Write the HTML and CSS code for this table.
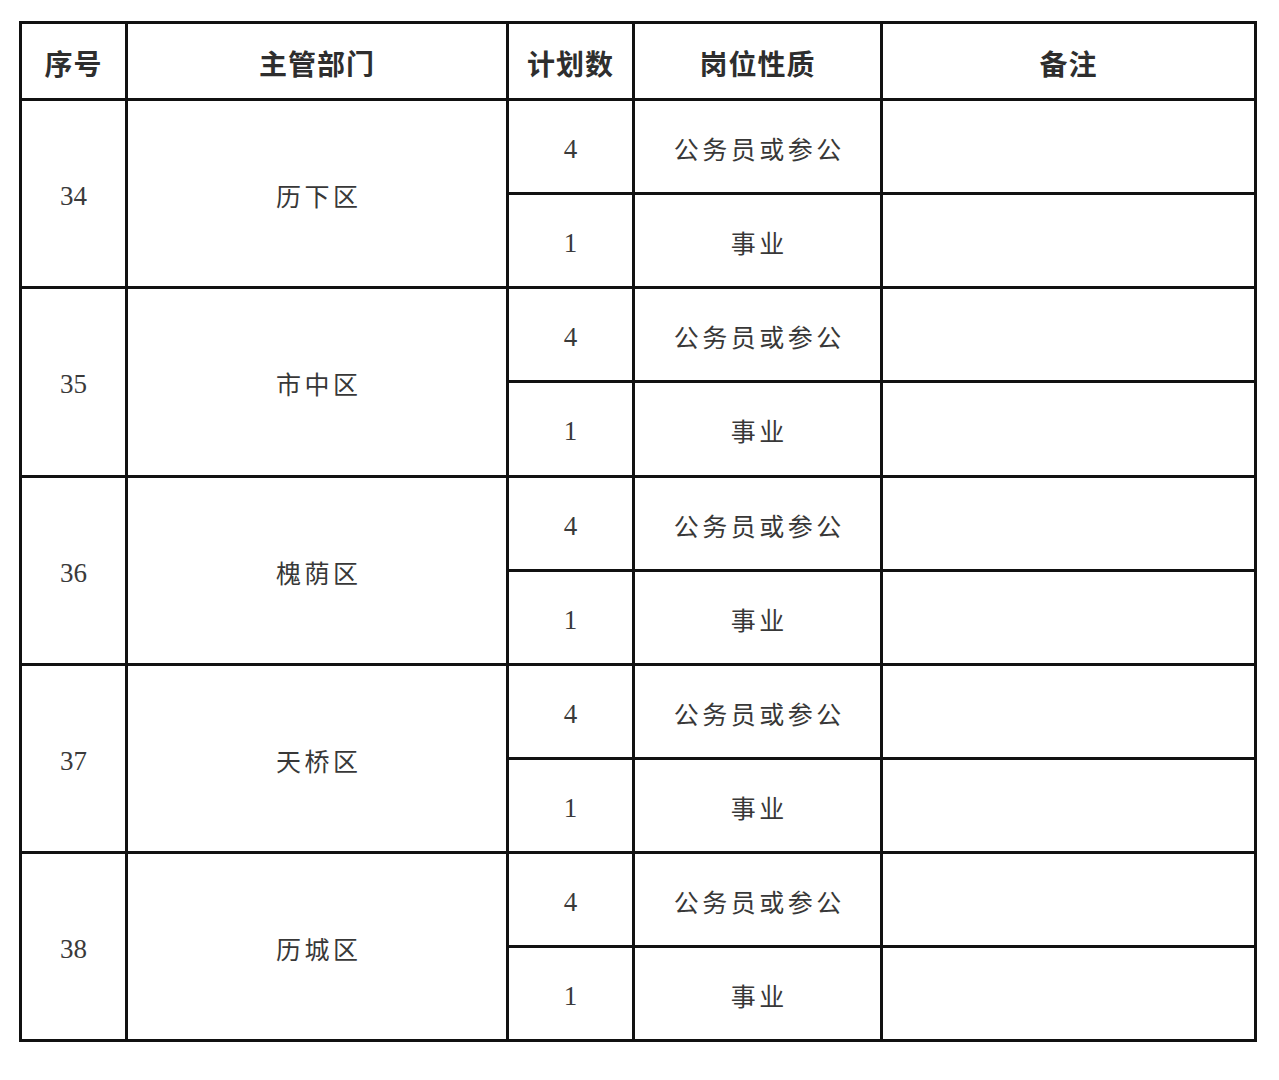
FILE: index.html
```html
<!DOCTYPE html>
<html lang="zh-CN">
<head>
<meta charset="utf-8">
<title>岗位计划表</title>
<link rel="stylesheet" href="styles.css">
</head>
<body>
<div class="sheet" role="table">
  <div class="cell head">序号</div>
  <div class="cell head">主管部门</div>
  <div class="cell head">计划数</div>
  <div class="cell head">岗位性质</div>
  <div class="cell head">备注</div>

  <div class="cell num span2">34</div>
  <div class="cell zh span2">历下区</div>
  <div class="cell num">4</div>
  <div class="cell zh">公务员或参公</div>
  <div class="cell"></div>
  <div class="cell num">1</div>
  <div class="cell zh">事业</div>
  <div class="cell"></div>

  <div class="cell num span2">35</div>
  <div class="cell zh span2">市中区</div>
  <div class="cell num">4</div>
  <div class="cell zh">公务员或参公</div>
  <div class="cell"></div>
  <div class="cell num">1</div>
  <div class="cell zh">事业</div>
  <div class="cell"></div>

  <div class="cell num span2">36</div>
  <div class="cell zh span2">槐荫区</div>
  <div class="cell num">4</div>
  <div class="cell zh">公务员或参公</div>
  <div class="cell"></div>
  <div class="cell num">1</div>
  <div class="cell zh">事业</div>
  <div class="cell"></div>

  <div class="cell num span2">37</div>
  <div class="cell zh span2">天桥区</div>
  <div class="cell num">4</div>
  <div class="cell zh">公务员或参公</div>
  <div class="cell"></div>
  <div class="cell num">1</div>
  <div class="cell zh">事业</div>
  <div class="cell"></div>

  <div class="cell num span2">38</div>
  <div class="cell zh span2">历城区</div>
  <div class="cell num">4</div>
  <div class="cell zh">公务员或参公</div>
  <div class="cell"></div>
  <div class="cell num">1</div>
  <div class="cell zh">事业</div>
  <div class="cell"></div>
</div>
</body>
</html>
```

FILE: styles.css
```css
html, body {
  margin: 0;
  padding: 0;
  background: #ffffff;
}

body {
  padding: 21px 0 0 19px;
}

.sheet {
  display: grid;
  grid-template-columns: 106px 381px 126px 248px 374px;
  grid-template-rows: 77px 94px 94px 94px 95px 94px 94px 94px 94px 94px 94px;
  width: max-content;
  border-left: 3px solid #111;
  border-top: 3px solid #111;
}

.cell {
  box-sizing: border-box;
  border-right: 3px solid #111;
  border-bottom: 3px solid #111;
  display: flex;
  align-items: center;
  justify-content: center;
  text-align: center;
}

.span2 {
  grid-row: span 2;
}

.head {
  font-family: "Noto Sans CJK SC", "Noto Sans", sans-serif;
  font-weight: 700;
  font-size: 28px;
  color: #2e2e2e;
  padding-top: 3px;
  letter-spacing: 1px;
}

.num {
  font-family: "Liberation Serif", "Times New Roman", serif;
  font-size: 27px;
  color: #3a3a3a;
  padding-top: 5px;
}

.zh {
  font-family: "Noto Sans CJK SC", "Noto Sans", sans-serif;
  font-weight: 400;
  font-size: 25px;
  color: #383838;
  letter-spacing: 3.5px;
  text-indent: 3.5px;
  padding-top: 2px;
}
```
